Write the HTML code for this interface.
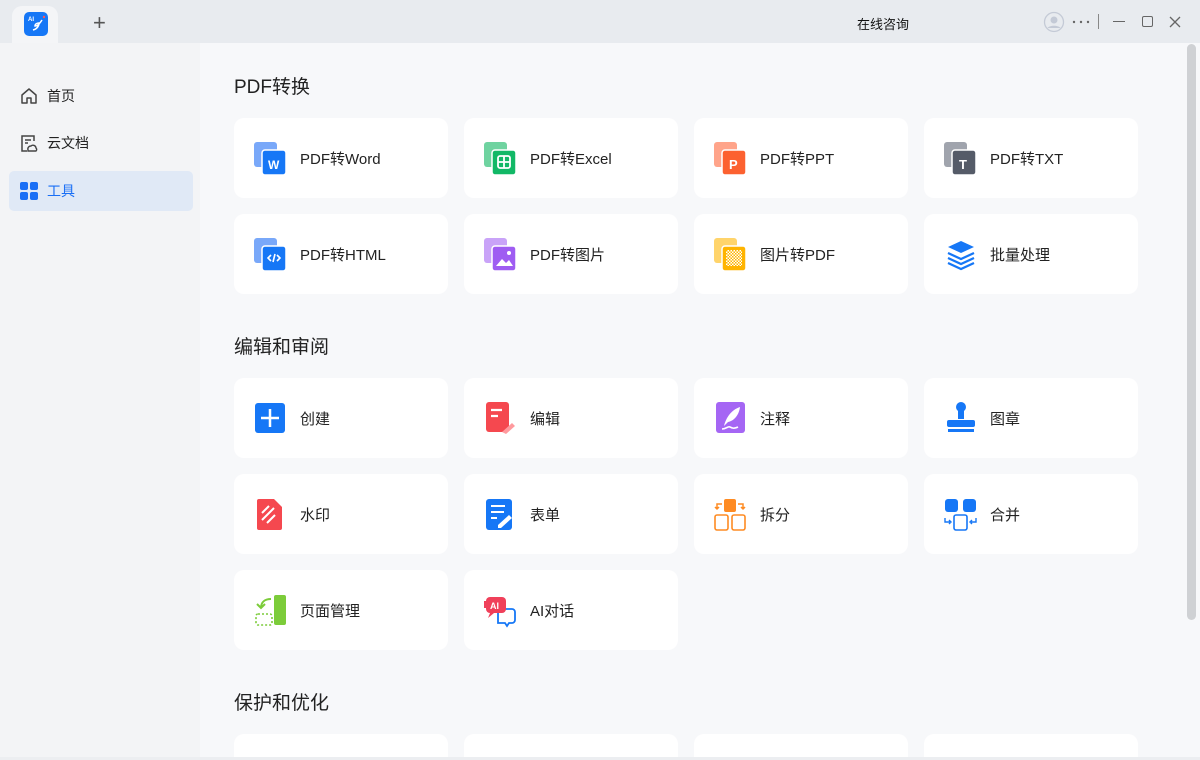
<!DOCTYPE html>
<html><head><meta charset="utf-8"><style>
*{margin:0;padding:0;box-sizing:border-box}
html{width:1200px;height:760px;overflow:hidden}
body{width:1200px;height:760px;overflow:hidden;background:#f7f8fa;font-family:"Liberation Sans","Noto Sans CJK SC",sans-serif;color:#222;position:relative}
.top{position:absolute;left:0;top:0;width:1200px;height:43px;background:#e8ebef}
.tab{position:absolute;left:12px;top:6px;width:46px;height:38px;background:#f4f5f7;border-radius:10px 10px 0 0}
.side{position:absolute;left:0;top:43px;width:200px;height:717px;background:#f3f4f6}
.nav{position:absolute;left:9px;width:184px;height:40px;border-radius:5px;font-size:14px;line-height:40px;padding-left:38px}
.nav svg{position:absolute;left:11px;top:11px}
.sel{background:#e0e9f6;color:#1a6ff5}
.h{position:absolute;left:234px;font-size:19px;color:#222}
.c{position:absolute;width:214px;height:80px;background:#fff;border-radius:10px}
.c svg{position:absolute;left:20px;top:24px}
.c span{position:absolute;left:66px;top:2px;line-height:80px;font-size:15px;color:#222}
.sb{position:absolute;left:1187px;top:44px;width:9px;height:576px;background:#cfd1d4;border-radius:5px}
.b{height:23px;border-radius:10px 10px 0 0}
</style></head><body>
<div class="top"></div>
<div class="tab"></div>
<svg style="position:absolute;left:24px;top:12px" width="24" height="24"><rect width="24" height="24" rx="5" fill="#1677f6"/><text x="4" y="9" font-size="6" fill="#fff" font-family="Liberation Sans" font-weight="bold">AI</text><path d="M9 18c4-1 6-4 6-7-2 0-4 1-4 3 3 0 5-3 7-6" stroke="#fff" stroke-width="1.5" fill="none"/><circle cx="20" cy="5" r="1.2" fill="#f55"/></svg>
<div style="position:absolute;left:93px;top:10px;font-size:22px;color:#555;font-weight:300">+</div>
<div style="position:absolute;left:857px;top:14px;font-size:13px;color:#111">在线咨询</div>
<svg style="position:absolute;left:1043px;top:11px" width="22" height="22"><circle cx="11" cy="11" r="9.5" fill="none" stroke="#c4cad6" stroke-width="1.3"/><circle cx="11" cy="9" r="3.5" fill="#c4cad6"/><path d="M4.5 17c2-3 11-3 13 0" fill="#c4cad6"/></svg>
<svg style="position:absolute;left:1072px;top:20px" width="20" height="4"><circle cx="2" cy="2" r="1.2" fill="#666"/><circle cx="9" cy="2" r="1.2" fill="#666"/><circle cx="16" cy="2" r="1.2" fill="#666"/></svg>
<div style="position:absolute;left:1098px;top:14px;width:1px;height:15px;background:#888"></div>
<div style="position:absolute;left:1113px;top:21px;width:12px;height:1.3px;background:#666"></div>
<div style="position:absolute;left:1142px;top:16px;width:11px;height:11px;border:1.3px solid #666;border-radius:2px"></div>
<svg style="position:absolute;left:1169px;top:16px" width="12" height="12"><path d="M1 1L11 11M11 1L1 11" stroke="#666" stroke-width="1.3"/></svg>
<div class="side">
<div class="nav" style="top:33px"><svg width="18" height="18"><path d="M2 8L9 2l7 6v8h-5v-5H7v5H2z" fill="none" stroke="#444" stroke-width="1.5" stroke-linejoin="round"/></svg>首页</div>
<div class="nav" style="top:80px"><svg width="18" height="18"><path d="M14 7V2H2v15h5" fill="none" stroke="#444" stroke-width="1.5"/><path d="M5 6h6M5 9h3" stroke="#444" stroke-width="1.5"/><path d="M8 16a3 3 0 0 1 3-4 3 3 0 0 1 5 2 2 2 0 0 1 0 3H8z" fill="none" stroke="#444" stroke-width="1.4"/></svg>云文档</div>
<div class="nav sel" style="top:128px"><svg width="18" height="18"><rect x="0" y="0" width="8" height="8" rx="2" fill="#1a6ff5"/><rect x="10" y="0" width="8" height="8" rx="2" fill="#1a6ff5"/><rect x="0" y="10" width="8" height="8" rx="2" fill="#1a6ff5"/><rect x="10" y="10" width="8" height="8" rx="2" fill="#1a6ff5"/></svg>工具</div>
</div>
<div class="h" style="top:72px">PDF转换</div>
<div class="h" style="top:332px">编辑和审阅</div>
<div class="h" style="top:688px">保护和优化</div>

<div class="c" style="left:234px;top:118px"><svg width="34" height="34"><rect x="0" y="0" width="23" height="25" rx="3" fill="#79a8f9"/><rect x="8" y="8" width="24" height="25" rx="3" fill="#1677f6" stroke="#fff" stroke-width="1.5"/><text x="14" y="27" font-size="12" font-weight="bold" fill="#fff" font-family="Liberation Sans">W</text></svg><span>PDF转Word</span></div>
<div class="c" style="left:464px;top:118px"><svg width="34" height="34"><rect x="0" y="0" width="23" height="25" rx="3" fill="#6fd3a0"/><rect x="8" y="8" width="24" height="25" rx="3" fill="#12b866" stroke="#fff" stroke-width="1.5"/><rect x="14" y="14" width="12" height="12" rx="2" fill="none" stroke="#fff" stroke-width="1.8"/><path d="M20 14v12M14 20h12" stroke="#fff" stroke-width="1.8"/></svg><span>PDF转Excel</span></div>
<div class="c" style="left:694px;top:118px"><svg width="34" height="34"><rect x="0" y="0" width="23" height="25" rx="3" fill="#ffa48a"/><rect x="8" y="8" width="24" height="25" rx="3" fill="#fc6130" stroke="#fff" stroke-width="1.5"/><text x="15" y="27" font-size="13" font-weight="bold" fill="#fff" font-family="Liberation Sans">P</text></svg><span>PDF转PPT</span></div>
<div class="c" style="left:924px;top:118px"><svg width="34" height="34"><rect x="0" y="0" width="23" height="25" rx="3" fill="#a0a4ad"/><rect x="8" y="8" width="24" height="25" rx="3" fill="#555b68" stroke="#fff" stroke-width="1.5"/><text x="15" y="27" font-size="13" font-weight="bold" fill="#fff" font-family="Liberation Sans">T</text></svg><span>PDF转TXT</span></div>

<div class="c" style="left:234px;top:214px"><svg width="34" height="34"><rect x="0" y="0" width="23" height="25" rx="3" fill="#79a8f9"/><rect x="8" y="8" width="24" height="25" rx="3" fill="#1677f6" stroke="#fff" stroke-width="1.5"/><path d="M17 17l-3 3 3 3M23 17l3 3-3 3M21 16l-2 8" stroke="#fff" stroke-width="1.6" fill="none"/></svg><span>PDF转HTML</span></div>
<div class="c" style="left:464px;top:214px"><svg width="34" height="34"><rect x="0" y="0" width="23" height="25" rx="3" fill="#c9a3f8"/><rect x="8" y="8" width="24" height="25" rx="3" fill="#9f5cf2" stroke="#fff" stroke-width="1.5"/><path d="M12 28l6-7 4 4 3-3 4 6z" fill="#fff"/><circle cx="25" cy="15" r="2" fill="#fff"/></svg><span>PDF转图片</span></div>
<div class="c" style="left:694px;top:214px"><svg width="34" height="34"><defs><pattern id="ch" width="3" height="3" patternUnits="userSpaceOnUse"><rect width="3" height="3" fill="#fff"/><rect width="1.5" height="1.5" fill="#ffb400"/><rect x="1.5" y="1.5" width="1.5" height="1.5" fill="#ffb400"/></pattern></defs><rect x="0" y="0" width="23" height="25" rx="3" fill="#ffd46b"/><rect x="8" y="8" width="24" height="25" rx="3" fill="#ffb400" stroke="#fff" stroke-width="1.5"/><rect x="12" y="12" width="16" height="16" fill="url(#ch)"/></svg><span>图片转PDF</span></div>
<div class="c" style="left:924px;top:214px"><svg width="34" height="34"><path d="M17 3l13 6-13 6-13-6z" fill="#1677f6"/><path d="M4 15l13 6 13-6M4 20l13 6 13-6M4 25l13 6 13-6" stroke="#1677f6" stroke-width="2.2" fill="none"/></svg><span>批量处理</span></div>

<div class="c" style="left:234px;top:378px"><svg width="34" height="34"><rect x="1" y="1" width="30" height="30" rx="3" fill="#1677f6"/><path d="M16 7v18M7 16h18" stroke="#fff" stroke-width="2.5"/></svg><span>创建</span></div>
<div class="c" style="left:464px;top:378px"><svg width="34" height="34"><rect x="2" y="0" width="23" height="30" rx="3" fill="#f5484f"/><path d="M7 8h11M7 14h7" stroke="#fff" stroke-width="2.2"/><path d="M18 30l10-9 3 3-9 8z" fill="#ff9a9e"/></svg><span>编辑</span></div>
<div class="c" style="left:694px;top:378px"><svg width="34" height="34"><rect x="2" y="0" width="29" height="31" rx="3" fill="#a566f4"/><path d="M10 24c2-8 7-16 16-19-1 8-6 14-12 15z" fill="#fff"/><path d="M8 27c4 0 6-3 8-2 2 1 4 2 8 0" stroke="#fff" stroke-width="1.6" fill="none"/></svg><span>注释</span></div>
<div class="c" style="left:924px;top:378px"><svg width="34" height="34"><circle cx="17" cy="5" r="5" fill="#1677f6"/><path d="M14 8h6v9h-6z" fill="#1677f6"/><rect x="3" y="18" width="28" height="7" rx="2" fill="#1677f6"/><rect x="4" y="27" width="26" height="3" fill="#1677f6"/></svg><span>图章</span></div>

<div class="c" style="left:234px;top:474px"><svg width="34" height="34"><path d="M5 1h15l8 8v21a2 2 0 0 1-2 2H5a2 2 0 0 1-2-2V3a2 2 0 0 1 2-2z" fill="#f5484f"/><path d="M8 15l7-7M8 22l12-12M13 25l8-8" stroke="#fff" stroke-width="2"/></svg><span>水印</span></div>
<div class="c" style="left:464px;top:474px"><svg width="34" height="34"><rect x="2" y="1" width="26" height="31" rx="3" fill="#1677f6"/><path d="M7 8h14M7 14h13M7 20h6" stroke="#fff" stroke-width="2"/><path d="M14 27l11-10 3 3-11 10h-3z" fill="#fff"/></svg><span>表单</span></div>
<div class="c" style="left:694px;top:474px"><svg width="34" height="34"><rect x="10" y="1" width="12" height="13" rx="2" fill="#fe8b23"/><rect x="1" y="17" width="13" height="15" rx="2" fill="none" stroke="#fe8b23" stroke-width="1.6"/><rect x="18" y="17" width="13" height="15" rx="2" fill="none" stroke="#fe8b23" stroke-width="1.6"/><path d="M8 6H3v5M1 9l2 2 2-2M24 6h5v5M27 9l2 2 2-2" stroke="#fe8b23" stroke-width="1.5" fill="none"/></svg><span>拆分</span></div>
<div class="c" style="left:924px;top:474px"><svg width="34" height="34"><rect x="1" y="1" width="13" height="13" rx="3" fill="#1677f6"/><rect x="19" y="1" width="13" height="13" rx="3" fill="#1677f6"/><rect x="10" y="17" width="13" height="15" rx="2" fill="none" stroke="#1677f6" stroke-width="1.6"/><path d="M1 20v4h5M5 22l2 2-2 2M32 20v4h-5M28 22l-2 2 2 2" stroke="#1677f6" stroke-width="1.4" fill="none"/></svg><span>合并</span></div>

<div class="c" style="left:234px;top:570px"><svg width="34" height="34"><rect x="20" y="1" width="12" height="30" rx="2" fill="#7ccc3a"/><rect x="2" y="20" width="16" height="11" rx="2" fill="none" stroke="#7ccc3a" stroke-width="1.6" stroke-dasharray="2 2"/><path d="M17 5c-6 0-10 3-10 9M3 10l4 4 4-4" stroke="#7ccc3a" stroke-width="2" fill="none"/></svg><span>页面管理</span></div>
<div class="c" style="left:464px;top:570px"><svg width="34" height="34"><path d="M14 15h14a3 3 0 0 1 3 3v8a3 3 0 0 1-3 3h-3l-2 3-2-3h-7z" fill="none" stroke="#1677f6" stroke-width="1.8"/><rect x="2" y="3" width="20" height="16" rx="4" fill="#f0405a"/><path d="M6 19l-2 5 6-5z" fill="#f0405a"/><rect x="0" y="7" width="2" height="7" fill="#f0405a"/><text x="6" y="15" font-size="9" font-weight="bold" fill="#fff" font-family="Liberation Sans">AI</text></svg><span>AI对话</span></div>

<div class="c b" style="left:234px;top:734px"></div>
<div class="c b" style="left:464px;top:734px"></div>
<div class="c b" style="left:694px;top:734px"></div>
<div class="c b" style="left:924px;top:734px"></div>
<div style="position:absolute;left:0;top:757px;width:1200px;height:3px;background:#eceef1"></div>
<div class="sb"></div>
</body></html>
